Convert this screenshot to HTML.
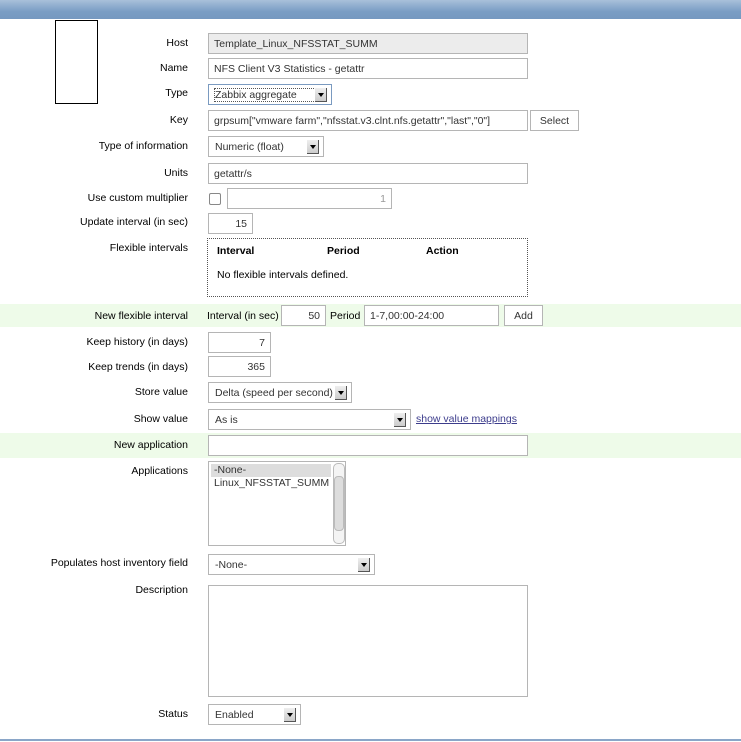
<!DOCTYPE html>
<html><head><meta charset="utf-8"><style>
*{box-sizing:border-box}
body{margin:0;width:741px;height:742px;background:#fff;font-family:"Liberation Sans",sans-serif;font-size:10.5px;color:#000;position:relative;overflow:hidden}
.hdr{position:absolute;left:0;top:0;width:741px;height:19px;background:linear-gradient(#a9c0da,#7a9dc4 60%,#7598c0)}
.a{position:absolute;white-space:nowrap}
.l{position:absolute;right:553px;white-space:nowrap;text-align:right}
.in{position:absolute;border:1px solid #b5b5b5;background:#fff;height:21px;line-height:20px;padding:0 5px;color:#333;white-space:nowrap;overflow:hidden}
.sel{position:absolute;border:1px solid #b5b5b5;background:#fff;height:21px;line-height:20px;padding:0 6px;color:#333;white-space:nowrap}
.sel:after{content:"";position:absolute;right:4px;top:3px;width:11px;height:13px;background:linear-gradient(#eee,#ccc);border-right:1px solid #555;border-bottom:1px solid #555}
.sel:before{content:"";position:absolute;right:7px;top:8px;border-left:3px solid transparent;border-right:3px solid transparent;border-top:4px solid #000;z-index:2}
.r{text-align:right}
.btn{position:absolute;border:1px solid #b5b5b5;background:#fff;height:21px;line-height:20px;text-align:center;color:#333}
.green{position:absolute;left:0;width:741px;background:#eefbe9}
</style></head><body>
<div class="hdr"></div>
<div class="a" style="left:55px;top:20px;width:43px;height:84px;border:1px solid #000"></div>

<div class="l" style="top:37px">Host</div>
<div class="in" style="left:208px;top:33px;width:320px;background:#ececec">Template_Linux_NFSSTAT_SUMM</div>

<div class="l" style="top:62px">Name</div>
<div class="in" style="left:208px;top:58px;width:320px">NFS Client V3 Statistics - getattr</div>

<div class="l" style="top:87px">Type</div>
<div class="sel" style="left:208px;top:84px;width:124px;border-color:#7a9ac0"><span style="outline:1px dotted #555;padding-right:18px">Zabbix aggregate</span></div>

<div class="l" style="top:114px">Key</div>
<div class="in" style="left:208px;top:110px;width:320px">grpsum["vmware farm","nfsstat.v3.clnt.nfs.getattr","last","0"]</div>
<div class="btn" style="left:530px;top:110px;width:49px">Select</div>

<div class="l" style="top:140px">Type of information</div>
<div class="sel" style="left:208px;top:136px;width:116px">Numeric (float)</div>

<div class="l" style="top:167px">Units</div>
<div class="in" style="left:208px;top:163px;width:320px">getattr/s</div>

<div class="l" style="top:192px">Use custom multiplier</div>
<div class="a" style="left:209px;top:193px;width:12px;height:12px;border:1px solid #888;border-radius:2px"></div>
<div class="in r" style="left:227px;top:188px;width:165px;color:#999">1</div>

<div class="l" style="top:216px">Update interval (in sec)</div>
<div class="in r" style="left:208px;top:213px;width:45px">15</div>

<div class="l" style="top:242px">Flexible intervals</div>
<div class="a" style="left:207px;top:238px;width:321px;height:59px;border:1px dotted #555"></div>
<div class="a" style="left:217px;top:245px;font-weight:bold">Interval</div>
<div class="a" style="left:327px;top:245px;font-weight:bold">Period</div>
<div class="a" style="left:426px;top:245px;font-weight:bold">Action</div>
<div class="a" style="left:217px;top:269px">No flexible intervals defined.</div>

<div class="green" style="top:304px;height:23px"></div>
<div class="l" style="top:310px">New flexible interval</div>
<div class="a" style="left:207px;top:310px">Interval (in sec)</div>
<div class="in r" style="left:281px;top:305px;width:45px">50</div>
<div class="a" style="left:330px;top:310px">Period</div>
<div class="in" style="left:364px;top:305px;width:135px">1-7,00:00-24:00</div>
<div class="btn" style="left:504px;top:305px;width:39px">Add</div>

<div class="l" style="top:336px">Keep history (in days)</div>
<div class="in r" style="left:208px;top:332px;width:63px">7</div>
<div class="l" style="top:361px">Keep trends (in days)</div>
<div class="in r" style="left:208px;top:356px;width:63px">365</div>

<div class="l" style="top:386px">Store value</div>
<div class="sel" style="left:208px;top:382px;width:144px">Delta (speed per second)</div>

<div class="l" style="top:413px">Show value</div>
<div class="sel" style="left:208px;top:409px;width:203px">As is</div>
<div class="a" style="left:416px;top:413px;color:#3c3c8c;text-decoration:underline">show value mappings</div>

<div class="green" style="top:433px;height:25px"></div>
<div class="l" style="top:439px">New application</div>
<div class="in" style="left:208px;top:435px;width:320px"></div>

<div class="l" style="top:465px">Applications</div>
<div class="a" style="left:208px;top:461px;width:138px;height:85px;border:1px solid #b5b5b5;color:#333">
 <div style="position:absolute;left:2px;top:2px;width:120px;height:13px;background:#ddd"></div>
 <div style="position:absolute;left:5px;top:2px">-None-</div>
 <div style="position:absolute;left:5px;top:15px">Linux_NFSSTAT_SUMM</div>
 <div style="position:absolute;left:124px;top:1px;width:12px;height:81px;border:1px solid #bbb;border-radius:5px;background:#f4f4f4"><div style="position:absolute;left:0;top:12px;width:10px;height:55px;background:#ddd;border:1px solid #bbb;border-radius:4px"></div></div>
</div>

<div class="l" style="top:557px">Populates host inventory field</div>
<div class="sel" style="left:208px;top:554px;width:167px">-None-</div>

<div class="l" style="top:584px">Description</div>
<div class="a" style="left:208px;top:585px;width:320px;height:112px;border:1px solid #b5b5b5"></div>

<div class="l" style="top:708px">Status</div>
<div class="sel" style="left:208px;top:704px;width:93px">Enabled</div>

<div class="a" style="left:0;top:739px;width:741px;height:2px;background:#8aa6c8"></div>
</body></html>
